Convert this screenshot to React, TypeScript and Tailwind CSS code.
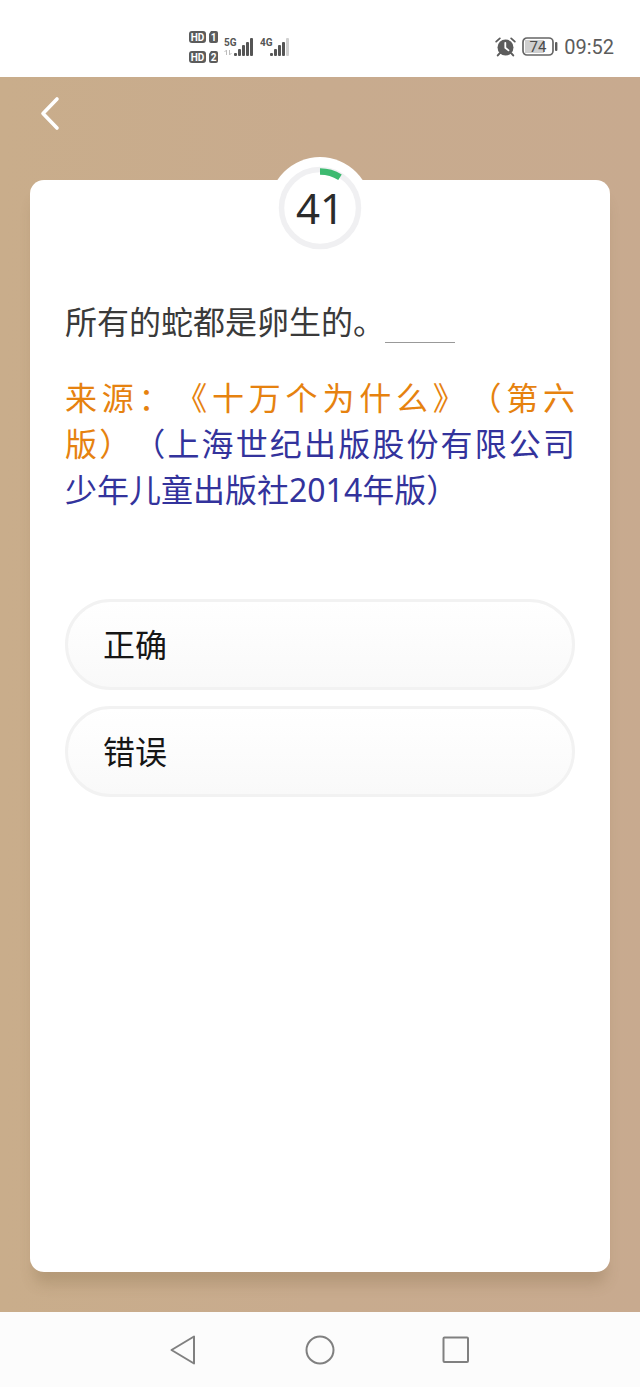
const options = ["正确", "错误"];

function HdBadge({ slot }: { slot: string }) {
  return (
    <svg width="29" height="12" viewBox="0 0 29 12">
      <rect width="17" height="12" rx="3" fill="#5c5c5c" />
      <text x="8.5" y="9.5" fontSize="10" fontWeight="700" fill="#fff" textAnchor="middle">
        HD
      </text>
      <path d="M22 0h5a2 2 0 0 1 2 2v8a2 2 0 0 1-2 2h-5a2 2 0 0 1-2-2V3z" fill="#5c5c5c" />
      <text x="24.5" y="9.5" fontSize="10" fontWeight="700" fill="#fff" textAnchor="middle">
        {slot}
      </text>
    </svg>
  );
}

function Signal({ label, full }: { label: string; full: boolean }) {
  return (
    <svg width="30" height="20" viewBox="0 0 30 20">
      <text x="0" y="9" fontSize="10" fontWeight="700" fill="#555" className="font-['Roboto',sans-serif]">
        {label}
      </text>
      {full && (
        <path d="M2.5 18v-5l-2 2M5.5 13v5l2-2" fill="none" stroke="#bdbdbd" />
      )}
      <g fill="#555">
        <rect x="10" y="16" width="3" height="3" rx="1" />
        <rect x="14" y="12" width="3" height="7" rx="1" />
        <rect x="18" y="8" width="3" height="11" rx="1" />
        <rect x="22" y="5" width="3" height="14" rx="1" />
        <rect x="26" y="1" width="3" height="18" rx="1" fill={full ? "#555" : "#d0d0d0"} />
      </g>
    </svg>
  );
}

function StatusBar() {
  return (
    <header className="flex h-[77px] items-center justify-between pt-4 pr-[26px] pl-[189px] font-['Roboto',sans-serif] text-[#5c5c5c]">
      <div className="flex items-center gap-[6px]">
        <div className="flex flex-col gap-2">
          <HdBadge slot="1" />
          <HdBadge slot="2" />
        </div>
        <Signal label="5G" full />
        <Signal label="4G" full={false} />
      </div>
      <div className="flex items-center gap-[6px]">
        <svg width="21" height="20" viewBox="0 0 21 20" fill="none" strokeLinecap="round">
          <circle cx="10.5" cy="10.5" r="8" fill="#5c5c5c" />
          <path d="M1.2 4.6 4.8 1.4M19.8 4.6l-3.6-3.2" stroke="#5c5c5c" strokeWidth="1.8" />
          <path d="m4.6 16.4-1.8 2M16.4 16.4l1.8 2" stroke="#5c5c5c" strokeWidth="2" />
          <path d="M10.3 5.8v5l3.2 2.6" stroke="#fff" strokeWidth="1.8" />
        </svg>
        <svg width="36" height="19" viewBox="0 0 36 19">
          <rect x="3" y="3" width="19" height="13" fill="#cfcfcf" />
          <rect x="1" y="1" width="30" height="17" rx="4" fill="none" stroke="#666" strokeWidth="1.7" />
          <rect x="33" y="5" width="2.4" height="9" rx="1" fill="#5c5c5c" />
          <text x="16" y="15" fontSize="15" fill="#4a4a4a" textAnchor="middle">
            74
          </text>
        </svg>
        <time className="text-xl">09:52</time>
      </div>
    </header>
  );
}

function QuestionNumber({ value }: { value: number }) {
  return (
    <div className="mx-auto -mt-[23px] grid size-[102px] place-items-center rounded-full bg-white">
      <svg viewBox="0 0 102 102" className="col-start-1 row-start-1 size-full" fill="none">
        <circle cx="51" cy="51" r="38.5" stroke="#f0f0f2" strokeWidth="5.5" />
        <path d="M51 14.5A37 37 0 0 1 71 20.3" stroke="#3dba70" strokeWidth="6.5" />
      </svg>
      <span className="col-start-1 row-start-1 font-['Noto_Sans',sans-serif] text-[42px] leading-none text-[#2b2b2b]">
        {value}
      </span>
    </div>
  );
}

function NavBar() {
  return (
    <nav className="flex h-[75px] items-center justify-center gap-[88px] bg-[#fcfcfc]">
      <button aria-label="Back" className="flex size-12 items-center justify-center">
        <svg width="30" height="30" viewBox="0 0 30 30" fill="none" stroke="#808080" strokeWidth="2" strokeLinejoin="round">
          <path d="M2.5 15 25 1.5v27z" />
        </svg>
      </button>
      <button aria-label="Home" className="flex size-12 items-center justify-center">
        <svg width="30" height="30" viewBox="0 0 30 30" fill="none" stroke="#808080" strokeWidth="2">
          <circle cx="15" cy="15" r="13.5" />
        </svg>
      </button>
      <button aria-label="Recents" className="flex size-12 items-center justify-center">
        <svg width="30" height="30" viewBox="0 0 30 30" fill="none" stroke="#808080" strokeWidth="2">
          <rect x="2.5" y="2.5" width="24.5" height="24.5" rx="1" />
        </svg>
      </button>
    </nav>
  );
}

export default function App() {
  return (
    <div className="flex min-h-screen flex-col bg-white font-['Noto_Sans','Noto_Sans_CJK_SC',sans-serif]" lang="zh-CN">
      <StatusBar />
      <main className="flex flex-1 flex-col bg-linear-to-r from-[#c9ad8b] via-[#c8ab8e] to-[#c8aa8f] px-[30px] pb-10">
        <div className="flex h-[103px] items-start pt-4">
          <button aria-label="返回" className="flex size-10 items-center justify-center">
            <svg width="24" height="36" viewBox="0 0 24 36" fill="none" stroke="#fff" strokeWidth="3.6" strokeLinecap="round" strokeLinejoin="round">
              <path d="M19 4 5 18.500 19 33" />
            </svg>
          </button>
        </div>

        <section className="flex-1 rounded-[14px] bg-white px-[35px] shadow-[0_16px_14px_-4px_rgba(110,85,50,0.22)]">
          <QuestionNumber value={41} />

          <p className="mt-10 text-[32px] leading-[46px] text-[#3a3a3a]">
            所有的蛇都是卵生的。
            <span className="inline-block h-9 w-[70px] border-b border-[#999] align-middle" />
          </p>
          <p className="mt-[30px] text-justify text-[32px] leading-[46px] text-[#33339c] [text-spacing-trim:space-all]">
            <span className="text-[#e6820f]">来源：《十万个为什么》（第六版）</span>
            （上海世纪出版股份有限公司少年儿童出版社2014年版）
          </p>

          <div className="mt-[86px] flex flex-col gap-4">
            {options.map((option) => (
              <button
                key={option}
                className="h-[91px] rounded-full border-3 border-[#f2f2f2] bg-linear-to-b from-white to-[#f9f9f9] px-[35px] text-left text-[32px] text-[#161616]"
              >
                {option}
              </button>
            ))}
          </div>
        </section>
      </main>
      <NavBar />
    </div>
  );
}
